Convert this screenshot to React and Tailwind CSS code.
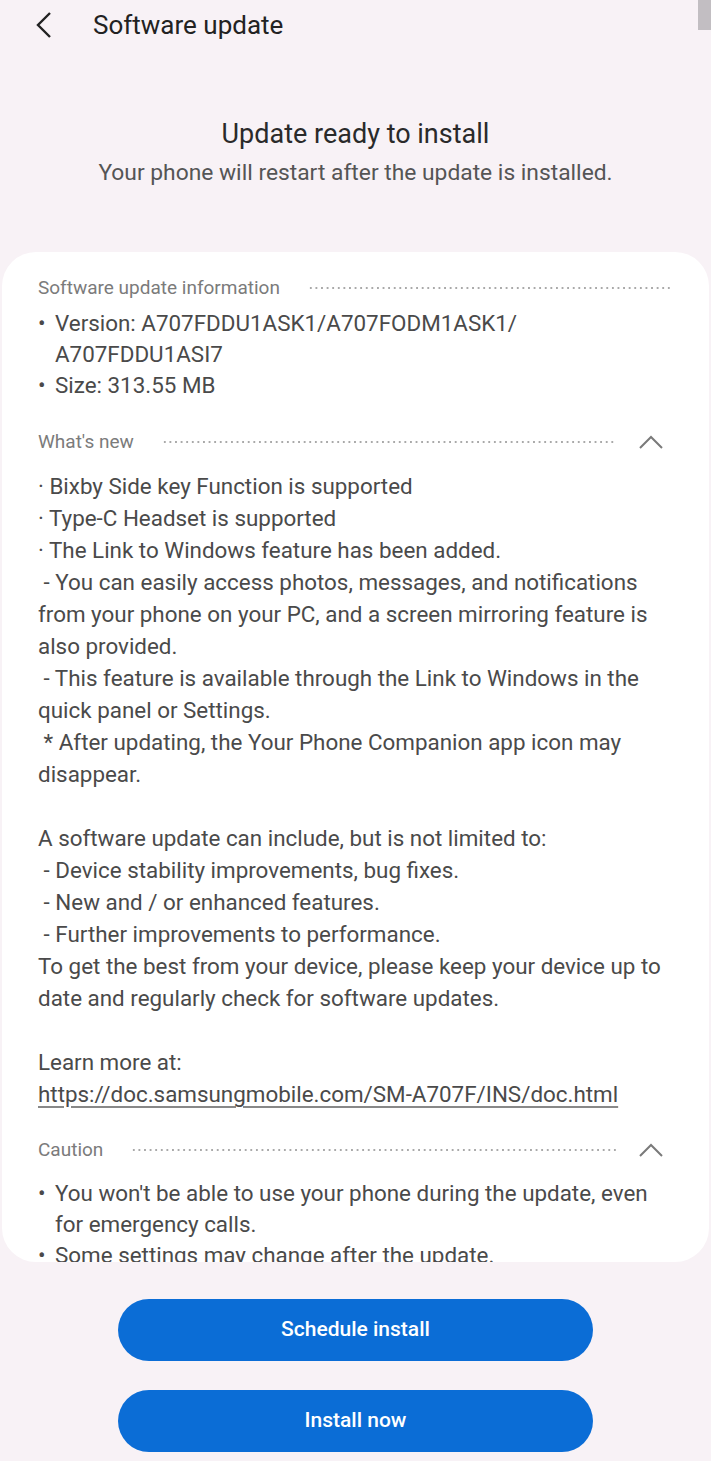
import React from "react";

const FONT = { fontFamily: "Roboto, 'Noto Sans', sans-serif" };

function Dots() {
  return (
    <div className="flex-1 h-[4px] bg-[radial-gradient(circle,#a9a9a9_1px,transparent_1.4px)] bg-[length:5.6px_4px] bg-repeat-x" />
  );
}

function ChevronUp() {
  return (
    <svg width="26" height="16" viewBox="0 0 26 16" className="ml-[22px] mr-[9px] shrink-0">
      <polyline points="2,14 13,3 24,14" fill="none" stroke="#7a7a7a" strokeWidth="2" />
    </svg>
  );
}

function SectionHeader({ title, chevron }) {
  return (
    <div className="flex items-center h-[40px]">
      <span className="text-[19px] text-[#7b7b7b] whitespace-nowrap mr-[28px]">{title}</span>
      <Dots />
      {chevron && <ChevronUp />}
    </div>
  );
}

function Bullet({ children }) {
  return (
    <div className="flex">
      <span className="w-[17px] shrink-0">•</span>
      <div className="whitespace-nowrap">{children}</div>
    </div>
  );
}

const whatsNew = [
  "· Bixby Side key Function is supported",
  "· Type-C Headset is supported",
  "· The Link to Windows feature has been added.",
  " - You can easily access photos, messages, and notifications",
  "from your phone on your PC, and a screen mirroring feature is",
  "also provided.",
  " - This feature is available through the Link to Windows in the",
  "quick panel or Settings.",
  " * After updating, the Your Phone Companion app icon may",
  "disappear.",
  "",
  "A software update can include, but is not limited to:",
  " - Device stability improvements, bug fixes.",
  " - New and / or enhanced features.",
  " - Further improvements to performance.",
  "To get the best from your device, please keep your device up to",
  "date and regularly check for software updates.",
  "",
  "Learn more at:",
];

export default function App() {
  return (
    <div className="w-[711px] h-[1461px] bg-[#f8f2f6] relative overflow-hidden" style={FONT}>
      {/* scrollbar thumb */}
      <div className="absolute top-0 right-0 w-[13px] h-[30px] bg-[#c2bec2]" />

      {/* Header */}
      <div className="flex items-center h-[50px] pl-[35px]">
        <svg width="18" height="28" viewBox="0 0 18 28">
          <polyline points="15,2 3,14 15,26" fill="none" stroke="#222" strokeWidth="2.4" />
        </svg>
        <span className="ml-[40px] text-[26px] text-[#222]">Software update</span>
      </div>

      {/* Status */}
      <div className="flex flex-col items-center pt-[66px]">
        <div className="text-[27px] leading-[36px] text-[#2a2a2a]">Update ready to install</div>
        <div className="text-[22.8px] leading-[30px] mt-[6px] text-[#555]">
          Your phone will restart after the update is installed.
        </div>
      </div>

      {/* Card */}
      <div className="mt-[64px] mx-[2px] h-[1010px] bg-white rounded-[34px] overflow-hidden px-[36px] pt-[16px]">
        <SectionHeader title="Software update information" />
        <div className="text-[22.4px] leading-[31px] text-[#4a4a4a]">
          <Bullet>
            Version: A707FDDU1ASK1/A707FODM1ASK1/
            <br />
            A707FDDU1ASI7
          </Bullet>
          <Bullet>Size: 313.55 MB</Bullet>
        </div>

        <div className="mt-[21px]">
          <SectionHeader title="What's new" chevron />
        </div>
        <div className="mt-[8px] text-[22.4px] leading-[32px] text-[#4a4a4a]">
          {whatsNew.map((l, i) => (
            <div key={i} className="whitespace-pre h-[32px]">
              {l}
            </div>
          ))}
          <div className="h-[32px] underline decoration-[#888] underline-offset-[4px] whitespace-nowrap">
            https://doc.samsungmobile.com/SM-A707F/INS/doc.html
          </div>
        </div>

        <div className="mt-[20px]">
          <SectionHeader title="Caution" chevron />
        </div>
        <div className="mt-[8px] text-[22.4px] leading-[31px] text-[#4a4a4a]">
          <Bullet>
            You won't be able to use your phone during the update, even
            <br />
            for emergency calls.
          </Bullet>
          <Bullet>Some settings may change after the update.</Bullet>
        </div>
      </div>

      {/* Buttons */}
      <div className="flex flex-col items-center gap-[29px] mt-[37px]">
        <button className="w-[475px] h-[62px] rounded-full bg-[#0b6dd6] text-white text-[21px] font-medium">
          Schedule install
        </button>
        <button className="w-[475px] h-[62px] rounded-full bg-[#0b6dd6] text-white text-[21px] font-medium">
          Install now
        </button>
      </div>
    </div>
  );
}
